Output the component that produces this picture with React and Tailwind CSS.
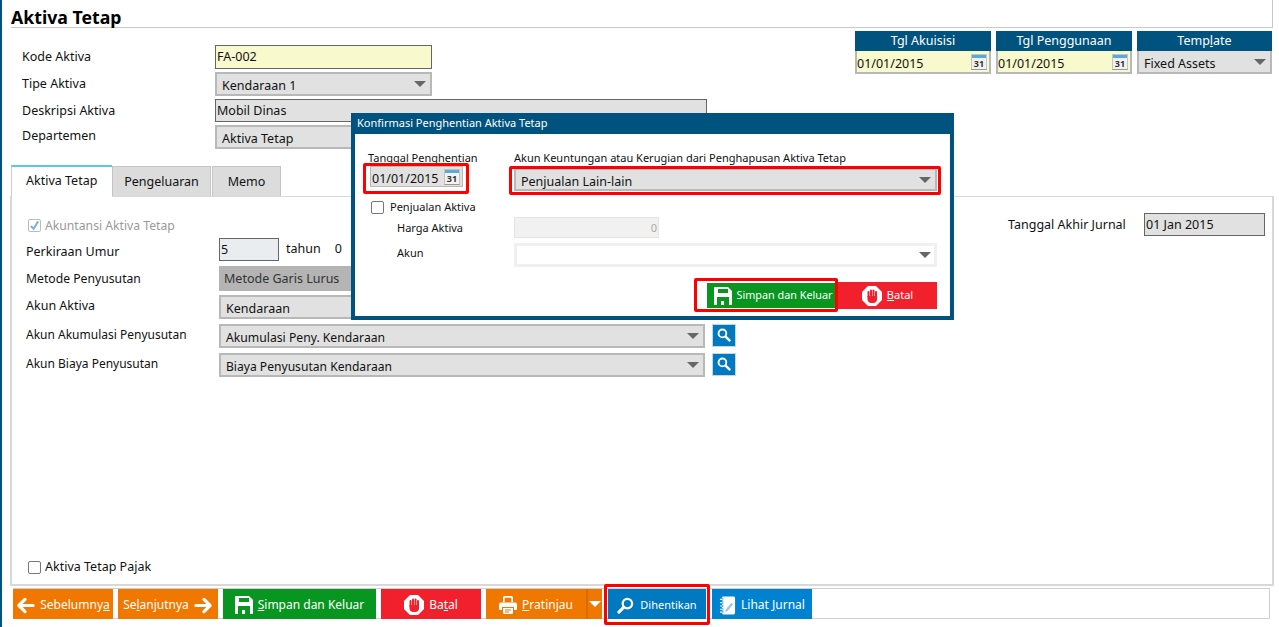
import React from "react"

const Caret = ({ color = "border-t-[#666]" }) => (
    <span className={`w-0 h-0 border-x-[6px] border-x-transparent border-t-[6px] ${color}`} />
)

const CalIcon = () => (
    <span className="w-[16px] h-[16px] flex flex-col border border-[#c4c4c4] border-b-[#999] bg-[#f2f2f2] shrink-0">
        <span className="h-[3px] bg-[#5aa9dd]" />
        <span className="text-[9px] leading-[11px] font-bold text-[#333] text-center">31</span>
    </span>
)

const Select = ({ text, className = "", textClass = "text-[12.5px]" }) => (
    <div className={`flex items-center justify-between shrink-0 bg-[#e1e1e1] border-2 border-[#b8b8b8] pl-[5px] pr-[4px] ${className}`}>
        <span className={`leading-none pt-[5px] ${textClass}`}>{text}</span>
        <Caret />
    </div>
)

const Field = ({ label, children, labelClass = "" }) => (
    <div className="flex items-center">
        <span className={`w-[193px] shrink-0 text-[12.5px] ${labelClass}`}>{label}</span>
        {children}
    </div>
)

const DateBox = ({ title, w = "w-[136px]" }) => (
    <div className={w}>
        <div className="h-[20px] bg-[#00527f] text-white text-[12.5px] leading-[20px] text-center">{title}</div>
        <div className="h-[23px] bg-[#f8f9cc] border-2 border-t-0 border-[#b8b8b8] flex items-center justify-between pr-[2px]">
            <span className="text-[12.5px] pt-[5px]">01/01/2015</span>
            <CalIcon />
        </div>
    </div>
)

const SearchGlyph = ({ className = "", flip = false }) => (
    <svg viewBox="0 0 18 18" className={className} fill="none" stroke="white">
        {flip ? (
            <>
                <circle cx="11" cy="7" r="5" strokeWidth="2.4" />
                <path d="M7 11l-5 5" strokeWidth="3.2" strokeLinecap="round" />
            </>
        ) : (
            <>
                <circle cx="7" cy="7" r="5" strokeWidth="2.4" />
                <path d="M11 11l5 5" strokeWidth="3.2" strokeLinecap="round" />
            </>
        )}
    </svg>
)

const SearchBtn = () => (
    <div className="w-[24px] h-[23px] shrink-0 bg-[#0079c1] border border-[#c4d8e4] flex items-center justify-center ml-[7px] -mt-[2px]">
        <SearchGlyph className="w-[14px] h-[14px]" />
    </div>
)

// floppy, white body with two cut outs
const Floppy = ({ bg = "#089620", className = "" }) => (
    <svg viewBox="0 0 18 18" className={className}>
        <path d="M1 0h13l4 4v13a1 1 0 0 1-1 1H1a1 1 0 0 1-1-1V1a1 1 0 0 1 1-1z" fill="white" />
        <rect x="4" y="2" width="10" height="4" fill={bg} />
        <rect x="3" y="10" width="12" height="8" fill={bg} />
        <rect x="7" y="14" width="3" height="4" fill="white" />
    </svg>
)

const StopIcon = () => (
    <svg viewBox="0 0 20 20" className="w-[20px] h-[20px] shrink-0">
        <polygon points="6,0 14,0 20,6 20,14 14,20 6,20 0,14 0,6" fill="white" />
        <g fill="#f1202c">
            <rect x="5.500" y="5" width="2" height="7" rx="1" />
            <rect x="8" y="3.500" width="2" height="8" rx="1" />
            <rect x="10.500" y="3.500" width="2" height="8" rx="1" />
            <rect x="13" y="5" width="2" height="7" rx="1" />
            <path d="M5.500 10h9.500v3a4 4 0 0 1-4 4H9.500a4 4 0 0 1-4-4z" />
        </g>
    </svg>
)

const Arrow = ({ right = false }) => (
    <svg viewBox="0 0 20 18" className={`w-[19px] h-[17px] shrink-0 ${right ? "-scale-x-100" : ""}`} fill="none" stroke="white" strokeWidth="3.4" strokeLinecap="round" strokeLinejoin="round">
        <path d="M18 9H3M9.500 2.500L3 9l6.500 6.500" />
    </svg>
)

const Printer = () => (
    <svg viewBox="0 0 18 18" className="w-[18px] h-[18px] shrink-0">
        <path d="M4 6V1.500A1.500 1.500 0 0 1 5.500 0h7A1.500 1.500 0 0 1 14 1.500V6h-1.700V1.800H5.700V6z" fill="white" />
        <path d="M2 6.500h14a2 2 0 0 1 2 2V13a1 1 0 0 1-1 1h-2v-3H3v3H1a1 1 0 0 1-1-1V8.500a2 2 0 0 1 2-2z" fill="white" />
        <path d="M4 12h10v4.500a1.500 1.500 0 0 1-1.500 1.500h-7A1.500 1.500 0 0 1 4 16.500z" fill="white" />
        <path d="M6 14h6M6 16h4" stroke="#f07800" strokeWidth="1" />
    </svg>
)

const Notebook = () => (
    <svg viewBox="0 0 18 20" className="w-[17px] h-[19px] shrink-0">
        <rect x="3" y="0.500" width="14" height="19" rx="1.500" fill="white" />
        <path d="M0.500 3.500h4M0.500 7h4M0.500 10.500h4M0.500 14h4M0.500 17h4" stroke="#0082d0" strokeWidth="2.400" />
        <path d="M1 3.500h3M1 7h3M1 10.500h3M1 14h3M1 17h3" stroke="white" strokeWidth="1.100" />
        <path d="M7 14.500l6-7.500 2 1.600-6 7.500-2.300.6z" fill="#9cc9e8" />
    </svg>
)

const Btn = ({ bg, w, children }) => (
    <div className={`h-[30px] ${w} ${bg} text-white flex items-center justify-center gap-[5px] text-[12px] pt-[2px]`}>
        {children}
    </div>
)

const Check = ({ checked, className = "" }) => (
    <span className={`w-[13px] h-[13px] rounded-[2px] border bg-white flex items-center justify-center shrink-0 ${checked ? "border-[#bbb]" : "border-[#777]"} ${className}`}>
        {checked && (
            <svg viewBox="0 0 12 12" className="w-[11px] h-[11px]" fill="none" stroke="#7fb6d6" strokeWidth="2.400">
                <path d="M2 6.500l3 3 5-8" />
            </svg>
        )}
    </span>
)

const App = () => {
    return (
        <div className="relative w-[1279px] h-[627px] overflow-hidden bg-white text-[#111] font-['Noto_Sans',sans-serif] flex">
            <div className="w-[2px] bg-[#00527f]" />
            <div className="flex-1 min-w-0 pl-[8px] pr-[5px] flex flex-col">
                {/* title */}
                <div className="h-[28px] ml-[1px] mr-[1px] border-b border-[#c8c8c8] border-r flex items-end">
                    <h1 className="text-[17.700px] leading-[24px] font-bold text-black mb-[-2px]">Aktiva Tetap</h1>
                </div>

                {/* top form */}
                <div className="h-[136px] flex justify-between">
                    <div className="pt-[17px] pl-[12px] flex flex-col gap-[3px]">
                        <Field label="Kode Aktiva">
                            <div className="w-[217px] h-[24px] bg-[#f8f9cc] border border-[#666] pl-[1px] text-[12.5px] leading-[22px]">FA-002</div>
                        </Field>
                        <Field label="Tipe Aktiva">
                            <Select text="Kendaraan 1" className="w-[217px] h-[24px]" />
                        </Field>
                        <Field label="Deskripsi Aktiva" labelClass="mt-[2px]">
                            <div className="w-[492px] h-[23px] bg-[#e1e1e1] border border-[#666] pl-[1px] text-[12.5px] leading-[21px]">Mobil Dinas</div>
                        </Field>
                        <Field label="Departemen" labelClass="mb-[2px]">
                            <Select text="Aktiva Tetap" className="w-[492px] h-[24px]" />
                        </Field>
                    </div>
                    <div className="pt-[3px] pr-[2px] flex gap-[5px]">
                        <DateBox title="Tgl Akuisisi" />
                        <DateBox title="Tgl Penggunaan" />
                        <div className="w-[135px]">
                            <div className="h-[20px] bg-[#00527f] text-white text-[12.5px] leading-[20px] text-center">Temp<span className="underline">l</span>ate</div>
                            <Select text="Fixed Assets" className="h-[23px] border-t-0" />
                        </div>
                    </div>
                </div>

                {/* tabs */}
                <div className="flex h-[32px] items-end ml-[1px] relative z-10">
                    <div className="w-[101px] h-[32px] bg-white border-t-2 border-t-[#5cc8e8] border-l border-l-[#ccc] pl-[14px] pt-[5px] text-[12.5px] -mb-[1px]">Aktiva Tetap</div>
                    <div className="w-[99px] h-[30px] bg-[#dcdcdc] border border-[#c4c4c4] border-b-0 text-center leading-[30px] text-[12.5px]">Pengeluaran</div>
                    <div className="w-[69px] h-[30px] ml-px bg-[#dcdcdc] border border-[#c4c4c4] border-b-0 text-center leading-[30px] text-[12.5px]">Memo</div>
                </div>

                {/* panel */}
                <div className="h-[390px] border-2 border-t border-[#d8d8d8] flex flex-col justify-between pb-[7px]">
                    <div className="pt-[19px] pl-[14px] flex justify-between items-start">
                        <div className="flex flex-col">
                            <div className="flex items-center gap-[4px] pl-[2px] h-[18px] text-[#9a9a9a] text-[12.2px]">
                                <Check checked />
                                <span className="mt-[2px]">Akuntansi Aktiva Tetap</span>
                            </div>
                            <div className="flex items-center mt-[4px] h-[23px]">
                                <span className="w-[193px] text-[12.5px] mt-[6px]">Perkiraan Umur</span>
                                <div className="w-[60px] h-[23px] bg-[#e9edef] border border-[#666] pl-[1px] text-[12.5px] leading-[21px]">5</div>
                                <span className="ml-[7px] text-[12.5px]">tahun</span>
                                <span className="ml-[14px] text-[12.5px]">0</span>
                            </div>
                            <div className="flex items-center mt-[5px]">
                                <span className="w-[193px] text-[12.2px] mt-[2px]">Metode Penyusutan</span>
                                <div className="w-[486px] h-[25px] bg-[#b4b4b4] pl-[5px] text-[12.5px] leading-[25px] text-[#333]">Metode Garis Lurus</div>
                            </div>
                            <div className="flex items-center mt-[4px]">
                                <span className="w-[193px] text-[12.5px] mb-[2px]">Akun Aktiva</span>
                                <Select text="Kendaraan" className="w-[486px] h-[24px]" />
                                <SearchBtn />
                            </div>
                            <div className="flex items-center mt-[5px]">
                                <span className="w-[193px] text-[12px] mb-[2px]">Akun Akumulasi Penyusutan</span>
                                <Select text="Akumulasi Peny. Kendaraan" textClass="text-[12.2px]" className="w-[486px] h-[24px]" />
                                <SearchBtn />
                            </div>
                            <div className="flex items-center mt-[5px]">
                                <span className="w-[193px] text-[12px] mb-[2px]">Akun Biaya Penyusutan</span>
                                <Select text="Biaya Penyusutan Kendaraan" textClass="text-[12.1px]" className="w-[486px] h-[24px]" />
                                <SearchBtn />
                            </div>
                        </div>
                        <div className="flex items-center pr-[7px] -mt-[3px]">
                            <span className="w-[136px] text-[12.5px] mt-[2px]">Tanggal Akhir Jurnal</span>
                            <div className="w-[121px] h-[23px] bg-[#e1e1e1] border border-[#666] pl-[1px] text-[12.5px] leading-[21px]">01 Jan 2015</div>
                        </div>
                    </div>
                    <div className="flex items-center gap-[4px] pl-[16px] text-[12.5px]">
                        <Check />
                        Aktiva Tetap Pajak
                    </div>
                </div>

                {/* toolbar */}
                <div className="mt-[2px] ml-[3px] mr-[4px] h-[31px] border border-[#d0d0d0] border-l-0 flex gap-[5px]">
                    <Btn bg="bg-[#f07800]" w="w-[100px]"><Arrow /><span>Sebelumny<span className="underline">a</span></span></Btn>
                    <Btn bg="bg-[#f07800]" w="w-[100px]"><span>Se<span className="underline">l</span>anjutnya</span><Arrow right /></Btn>
                    <Btn bg="bg-[#089620]" w="w-[153px]"><Floppy className="w-[18px] h-[18px]" /><span><span className="underline">S</span>impan dan Keluar</span></Btn>
                    <Btn bg="bg-[#f1202c]" w="w-[100px]"><StopIcon /><span>Ba<span className="underline">t</span>al</span></Btn>
                    <div className="flex">
                        <Btn bg="bg-[#f07800]" w="w-[100px]"><Printer /><span><span className="underline">P</span>ratinjau</span></Btn>
                        <div className="w-[16px] h-[30px] bg-[#f07800] border-l-2 border-l-[#d96c00] flex items-center justify-center"><Caret color="border-t-white" /></div>
                    </div>
                    <div className="ml-px">
                        <Btn bg="bg-[#0079c1]" w="w-[98px]"><SearchGlyph flip className="w-[17px] h-[17px] shrink-0" /><span className="text-[11px] ml-[1px]">Dihentikan</span></Btn>
                    </div>
                    <div className="ml-px">
                        <Btn bg="bg-[#0082d0]" w="w-[100px]">
                            <Notebook />
                            <span>Lihat <span className="underline">J</span>urnal</span>
                        </Btn>
                    </div>
                </div>
            </div>

            {/* annotation on toolbar */}
            <div className="absolute left-[604px] top-[584px] w-[106px] h-[41px] border-[3px] border-[#ff0000] rounded-[2px]" />

            {/* modal */}
            <div className="absolute left-[351px] top-[113px] w-[603px] h-[207px] bg-white border-[4px] border-t-0 border-[#00527f] flex flex-col">
                <div className="h-[21px] bg-[#00527f] text-white text-[11px] leading-[20px] pl-[2px] shrink-0">Konfirmasi Penghentian Aktiva Tetap</div>
                <div className="relative flex-1 pl-[13px] pr-[13px]">
                    <div className="flex mt-[17px]">
                        <div className="w-[146px] text-[11px] leading-[14px]">Tanggal Penghentian</div>
                        <div className="text-[11px] leading-[14px]">Akun Keuntungan atau Kerugian dari Penghapusan Aktiva Tetap</div>
                    </div>
                    <div className="flex mt-[3px]">
                        <div className="w-[146px] pl-[2px]">
                            <div className="w-[93px] h-[21px] mt-[-2px] bg-[#e1e1e1] border border-[#b8b8b8] pl-[1px] pr-[2px] flex items-center justify-between text-[12.5px]">
                                <span className="pt-[5px]">01/01/2015</span>
                                <CalIcon />
                            </div>
                        </div>
                        <Select text="Penjualan Lain-lain" className="w-[423px] h-[23px] pl-[5px]" />
                    </div>
                    <div className="flex items-center gap-[6px] pl-[3px] mt-[9px] text-[11px] leading-[14px]">
                        <Check />
                        Penjualan Aktiva
                    </div>
                    <div className="flex items-center mt-[3px]">
                        <span className="w-[146px] pl-[29px] text-[11px] mt-[1px]">Harga Aktiva</span>
                        <div className="w-[145px] h-[21px] bg-[#f1f1f1] border border-[#e4e4e4] text-right pr-[1px] text-[11px] leading-[19px] text-[#aaa]">0</div>
                    </div>
                    <div className="flex items-center mt-[5px]">
                        <span className="w-[146px] pl-[29px] text-[11px] mb-[4px]">Akun</span>
                        <div className="w-[423px] h-[24px] border-[3px] border-[#f0f0f0] flex items-center justify-end pr-[3px]"><Caret /></div>
                    </div>
                    <div className="flex justify-end mt-[15px]">
                        <div className="w-[132px] h-[27px] bg-[#089620] border border-white text-white text-[10.800px] flex items-center justify-center gap-[5px] pl-[2px]">
                            <Floppy className="w-[18px] h-[18px] shrink-0" />
                            <span>Simpan dan Keluar</span>
                        </div>
                        <div className="w-[99px] h-[27px] bg-[#f1202c] text-white text-[11px] flex items-center justify-center gap-[5px]">
                            <StopIcon />
                            <span><span className="underline">B</span>atal</span>
                        </div>
                    </div>

                    {/* red annotations */}
                    <div className="absolute left-[8px] top-[29px] w-[106px] h-[31px] border-[3px] border-[#ff0000] rounded-[2px]" />
                    <div className="absolute left-[154px] top-[32px] w-[432px] h-[29px] border-[3px] border-[#ff0000] rounded-[2px]" />
                    <div className="absolute left-[339px] top-[144px] w-[144px] h-[34px] border-[3px] border-[#ff0000] rounded-[2px]" />
                </div>
            </div>
        </div>
    )
}

export default App
